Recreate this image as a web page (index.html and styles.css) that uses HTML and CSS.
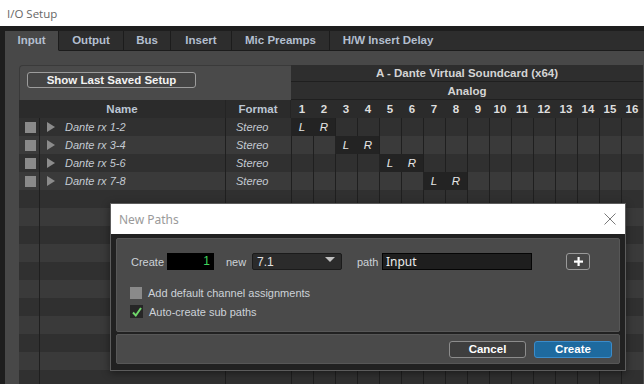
FILE: index.html
```html
<!DOCTYPE html>
<html>
<head>
<meta charset="utf-8">
<link rel="stylesheet" href="styles.css">
</head>
<body>
<div class="titlebar">I/O Setup</div>
<div class="app">
  <div class="tabs">
    <div class="tab active w-input">Input</div>
    <div class="tab w-output">Output</div>
    <div class="tab w-bus">Bus</div>
    <div class="tab w-insert">Insert</div>
    <div class="tab w-mic">Mic Preamps</div>
    <div class="tab w-hw">H/W Insert Delay</div>
    <div class="tab-fill"></div>
  </div>
  <div class="content">
    <div class="grid">
      <div class="hdr-left"><button class="btn-saved">Show Last Saved Setup</button></div>
      <div class="hdr-device">A - Dante Virtual Soundcard (x64)</div>
      <div class="hdr-analog">Analog</div>
      <div class="hdr-name">Name</div>
      <div class="hdr-format">Format</div>
      <div class="hdr-nums">
        <span>1</span><span>2</span><span>3</span><span>4</span><span>5</span><span>6</span><span>7</span><span>8</span>
        <span>9</span><span>10</span><span>11</span><span>12</span><span>13</span><span>14</span><span>15</span><span>16</span>
      </div>

      <div class="row odd"><div class="ck"><i class="box"></i></div><div class="nm"><i class="tri"></i>Dante rx 1-2</div><div class="fm">Stereo</div><div class="chs"><span class="lr at1">L</span><span class="lr at2">R</span></div></div>
      <div class="row even"><div class="ck"><i class="box"></i></div><div class="nm"><i class="tri"></i>Dante rx 3-4</div><div class="fm">Stereo</div><div class="chs"><span class="lr at3">L</span><span class="lr at4">R</span></div></div>
      <div class="row odd"><div class="ck"><i class="box"></i></div><div class="nm"><i class="tri"></i>Dante rx 5-6</div><div class="fm">Stereo</div><div class="chs"><span class="lr at5">L</span><span class="lr at6">R</span></div></div>
      <div class="row even"><div class="ck"><i class="box"></i></div><div class="nm"><i class="tri"></i>Dante rx 7-8</div><div class="fm">Stereo</div><div class="chs"><span class="lr at7">L</span><span class="lr at8">R</span></div></div>
      <div class="row odd"><div class="ck"></div><div class="nm"></div><div class="fm"></div><div class="chs"></div></div>
      <div class="row even"><div class="ck"></div><div class="nm"></div><div class="fm"></div><div class="chs"></div></div>
      <div class="row odd"><div class="ck"></div><div class="nm"></div><div class="fm"></div><div class="chs"></div></div>
      <div class="row even"><div class="ck"></div><div class="nm"></div><div class="fm"></div><div class="chs"></div></div>
      <div class="row odd"><div class="ck"></div><div class="nm"></div><div class="fm"></div><div class="chs"></div></div>
      <div class="row even"><div class="ck"></div><div class="nm"></div><div class="fm"></div><div class="chs"></div></div>
      <div class="row odd"><div class="ck"></div><div class="nm"></div><div class="fm"></div><div class="chs"></div></div>
      <div class="row even"><div class="ck"></div><div class="nm"></div><div class="fm"></div><div class="chs"></div></div>
      <div class="row odd"><div class="ck"></div><div class="nm"></div><div class="fm"></div><div class="chs"></div></div>
      <div class="row even"><div class="ck"></div><div class="nm"></div><div class="fm"></div><div class="chs"></div></div>
      <div class="row odd"><div class="ck"></div><div class="nm"></div><div class="fm"></div><div class="chs"></div></div>
    </div>
  </div>
</div>

<div class="dlg">
  <div class="dlg-title">
    <span>New Paths</span>
    <svg class="close" width="12" height="12" viewBox="0 0 12 12"><path d="M0.5 0.5L11.5 11.5M11.5 0.5L0.5 11.5" stroke="#7a7a7a" stroke-width="1" fill="none"/></svg>
  </div>
  <div class="dlg-body">
    <div class="panel main">
      <div class="form-row">
        <span class="lbl lbl-create">Create</span>
        <div class="num-input">1</div>
        <span class="lbl lbl-new">new</span>
        <div class="select"><span>7.1</span><i class="caret"></i></div>
        <span class="lbl lbl-path">path</span>
        <div class="text-input">Input</div>
        <div class="plus-btn"><svg width="9" height="9" viewBox="0 0 9 9"><rect x="3.5" y="0" width="2.2" height="9" fill="#fff"/><rect x="0" y="3.5" width="9" height="2.2" fill="#fff"/></svg></div>
      </div>
      <label class="check-row first"><i class="cbox"></i><span>Add default channel assignments</span></label>
      <label class="check-row"><i class="cbox on"><svg width="12" height="12" viewBox="0 0 12 12"><path d="M2 6.5L4.8 9.5L10 2" stroke="#6fd66a" stroke-width="2" fill="none"/></svg></i><span>Auto-create sub paths</span></label>
    </div>
    <div class="panel footer">
      <button class="btn cancel">Cancel</button>
      <button class="btn create">Create</button>
    </div>
  </div>
</div>
</body>
</html>
```

FILE: styles.css
```css
* { box-sizing: border-box; margin: 0; padding: 0; }
html, body { width: 644px; height: 384px; overflow: hidden; }
body {
  position: relative;
  background: #1e1e1e;
  font-family: "Liberation Sans", Arial, sans-serif;
  font-size: 12px;
}
.titlebar {
  height: 26px;
  background: #fff;
  color: #666;
  font-family: "Open Sans", "Noto Sans", sans-serif;
  font-size: 11.5px;
  padding-left: 7px;
  display: flex;
  align-items: center;
}
.app {
  height: 358px;
  padding-top: 5px;
  display: flex;
  flex-direction: column;
}
.tabs {
  display: flex;
  height: 20px;
  margin-left: 5px;
  background: #2d2d2d;
}
.tab {
  height: 20px;
  border-right: 1px solid #1c1c1c;
  border-bottom: 1px solid #1c1c1c;
  color: #b3bfcf;
  font-weight: bold;
  font-size: 11.5px;
  display: flex;
  align-items: center;
  justify-content: center;
  padding-bottom: 1px;
}
.tab.active { background: #484848; border-bottom-color: #484848; }
.tab-fill { flex: 1; border-bottom: 1px solid #1c1c1c; }
.w-input { width: 54px; }
.w-output { width: 65px; }
.w-bus { width: 47px; }
.w-insert { width: 61px; }
.w-mic { width: 98px; }
.w-hw { width: 116px; border-right: none; }

.content {
  flex: 1;
  margin-left: 5px;
  background: #484848;
  padding: 14px 0 0 14px;
  overflow: hidden;
}
.grid {
  display: grid;
  grid-template-columns: 21px 186px 65px repeat(16, 22px);
  grid-template-rows: 17px 18px 18px;
  grid-auto-rows: 18px;
  width: 625px;
}
.hdr-left {
  grid-column: 1 / 4;
  grid-row: 1 / 3;
  background: #4a4a4a;
  border-top: 1px solid #3a3a3a;
  border-left: 1px solid #3a3a3a;
  border-top-left-radius: 4px;
  padding: 6px 0 0 7px;
}
.btn-saved {
  width: 169px;
  height: 16px;
  background: #444;
  border: 1px solid #9c9c9c;
  border-radius: 3px;
  color: #f2f2f2;
  font-family: "Liberation Sans", Arial, sans-serif;
  font-weight: bold;
  font-size: 11.5px;
  line-height: 14px;
}
.hdr-device, .hdr-analog {
  grid-column: 4 / 20;
  background: #2e2e2e;
  color: #d4d4d4;
  font-weight: bold;
  font-size: 11.5px;
  display: flex;
  align-items: center;
  justify-content: center;
  border-bottom: 1px solid #1f1f1f;
}
.hdr-device { grid-row: 1; }
.hdr-analog { grid-row: 2; }
.hdr-name, .hdr-format {
  grid-row: 3;
  background: #2b2b2b;
  color: #bcc6d4;
  font-weight: bold;
  font-size: 11.5px;
  display: flex;
  align-items: center;
  justify-content: center;
  border-right: 1px solid #242424;
}
.hdr-name { grid-column: 1 / 3; }
.hdr-format { grid-column: 3; }
.hdr-nums {
  grid-column: 4 / 20;
  grid-row: 3;
  background: #2b2b2b;
  display: grid;
  grid-template-columns: repeat(16, 22px);
}
.hdr-nums span {
  color: #dedede;
  font-weight: bold;
  font-size: 11.5px;
  display: flex;
  align-items: center;
  justify-content: center;
}

.row {
  grid-column: 1 / 20;
  display: grid;
  grid-template-columns: 21px 186px 65px 352px;
  height: 18px;
}
.row.odd { background: #303030; }
.row.even { background: #3a3a3a; }
.ck {
  border-right: 1px solid #1f1f1f;
  display: flex;
  align-items: center;
  padding-left: 6px;
}
.box {
  display: block;
  width: 11px;
  height: 11px;
  background: #8a8a8a;
}
.nm {
  border-right: 1px solid #1f1f1f;
  display: flex;
  align-items: center;
  padding-left: 7px;
  color: #c4cad2;
  font-style: italic;
  font-size: 11px;
}
.tri {
  display: block;
  width: 0;
  height: 0;
  border-left: 8px solid #8c8c8c;
  border-top: 5px solid transparent;
  border-bottom: 5px solid transparent;
  margin-right: 10px;
}
.fm {
  display: flex;
  align-items: center;
  padding-left: 10px;
  color: #c4cad2;
  font-style: italic;
  font-size: 11px;
}
.chs {
  display: grid;
  grid-template-columns: repeat(16, 22px);
  grid-template-rows: 18px;
  background-image: repeating-linear-gradient(to right, #1f1f1f 0 1px, transparent 1px 22px);
}
.lr {
  grid-row: 1;
  background: #232323;
  color: #e6e6e6;
  font-style: italic;
  font-size: 11.5px;
  display: flex;
  align-items: center;
  justify-content: center;
}
.at1 { grid-column: 1; }
.at2 { grid-column: 2; }
.at3 { grid-column: 3; }
.at4 { grid-column: 4; }
.at5 { grid-column: 5; }
.at6 { grid-column: 6; }
.at7 { grid-column: 7; }
.at8 { grid-column: 8; }

/* dialog */
.dlg {
  position: absolute;
  left: 110px;
  top: 203px;
  width: 516px;
  height: 168px;
  border: 1px solid #5c5c5c;
  background: #212121;
  box-shadow: 0 2px 8px rgba(0,0,0,0.45);
}
.dlg-title {
  height: 30px;
  background: #fff;
  color: #9a9a9a;
  font-family: "Noto Sans", sans-serif;
  font-size: 12px;
  display: flex;
  align-items: center;
  justify-content: space-between;
  padding: 0 9px 0 8px;
}
.dlg-body {
  padding: 4px 5px 0 5px;
}
.panel {
  background: #4a4a4a;
  border: 1px solid #575757;
  border-radius: 2px;
}
.panel.main {
  height: 94px;
  padding: 14px 0 0 14px;
  margin-bottom: 2px;
}
.form-row {
  display: flex;
  align-items: center;
  height: 17px;
}
.lbl {
  color: #cdd2d8;
  font-size: 11px;
}
.lbl-create { width: 36px; }
.num-input {
  width: 47px;
  height: 17px;
  background: #000;
  color: #3fd45c;
  text-align: right;
  padding-right: 4px;
  font-size: 12px;
  line-height: 17px;
}
.lbl-new { margin-left: 12px; width: 26px; }
.select {
  width: 90px;
  height: 17px;
  background: #2b2b2b;
  border: 1px solid #1b1b1b;
  border-radius: 2px;
  color: #e0e0e0;
  font-size: 12px;
  display: flex;
  align-items: center;
  justify-content: space-between;
  padding: 0 6px 0 4px;
}
.caret {
  display: block;
  width: 0;
  height: 0;
  border-top: 5px solid #c0c0c0;
  border-left: 5px solid transparent;
  border-right: 5px solid transparent;
  margin-top: -4px;
}
.lbl-path { margin-left: 15px; width: 25px; }
.text-input {
  width: 150px;
  height: 17px;
  background: #1e1e1e;
  border: 1px solid #050505;
  color: #ececec;
  font-family: "Noto Sans", sans-serif;
  font-size: 12px;
  line-height: 15px;
  padding-left: 3px;
}
.plus-btn {
  margin-left: 34px;
  width: 24px;
  height: 17px;
  background: #474747;
  border: 1px solid #9a9a9a;
  border-radius: 3px;
  display: flex;
  align-items: center;
  justify-content: center;
}
.check-row {
  display: flex;
  align-items: center;
  height: 13px;
  margin-left: -1px;
  margin-top: 6px;
  color: #cdd2d8;
  font-size: 11px;
}
.check-row.first { margin-top: 16px; }
.cbox {
  display: flex;
  align-items: center;
  justify-content: center;
  width: 12px;
  height: 12px;
  background: #8a8a8a;
  margin-right: 6px;
}
.cbox.on { background: #262626; width: 13px; height: 13px; }
.panel.footer {
  height: 30px;
  display: flex;
  align-items: center;
  justify-content: flex-end;
  padding-right: 7px;
  gap: 8px;
}
.btn {
  height: 17px;
  border-radius: 3px;
  color: #fff;
  font-family: "Liberation Sans", Arial, sans-serif;
  font-weight: bold;
  font-size: 11.5px;
  line-height: 15px;
}
.btn.cancel { width: 77px; background: #3e3e3e; border: 1px solid #8c8c8c; }
.btn.create { width: 78px; background: #1e6a9f; border: 1px solid #3b8ccb; }
```
